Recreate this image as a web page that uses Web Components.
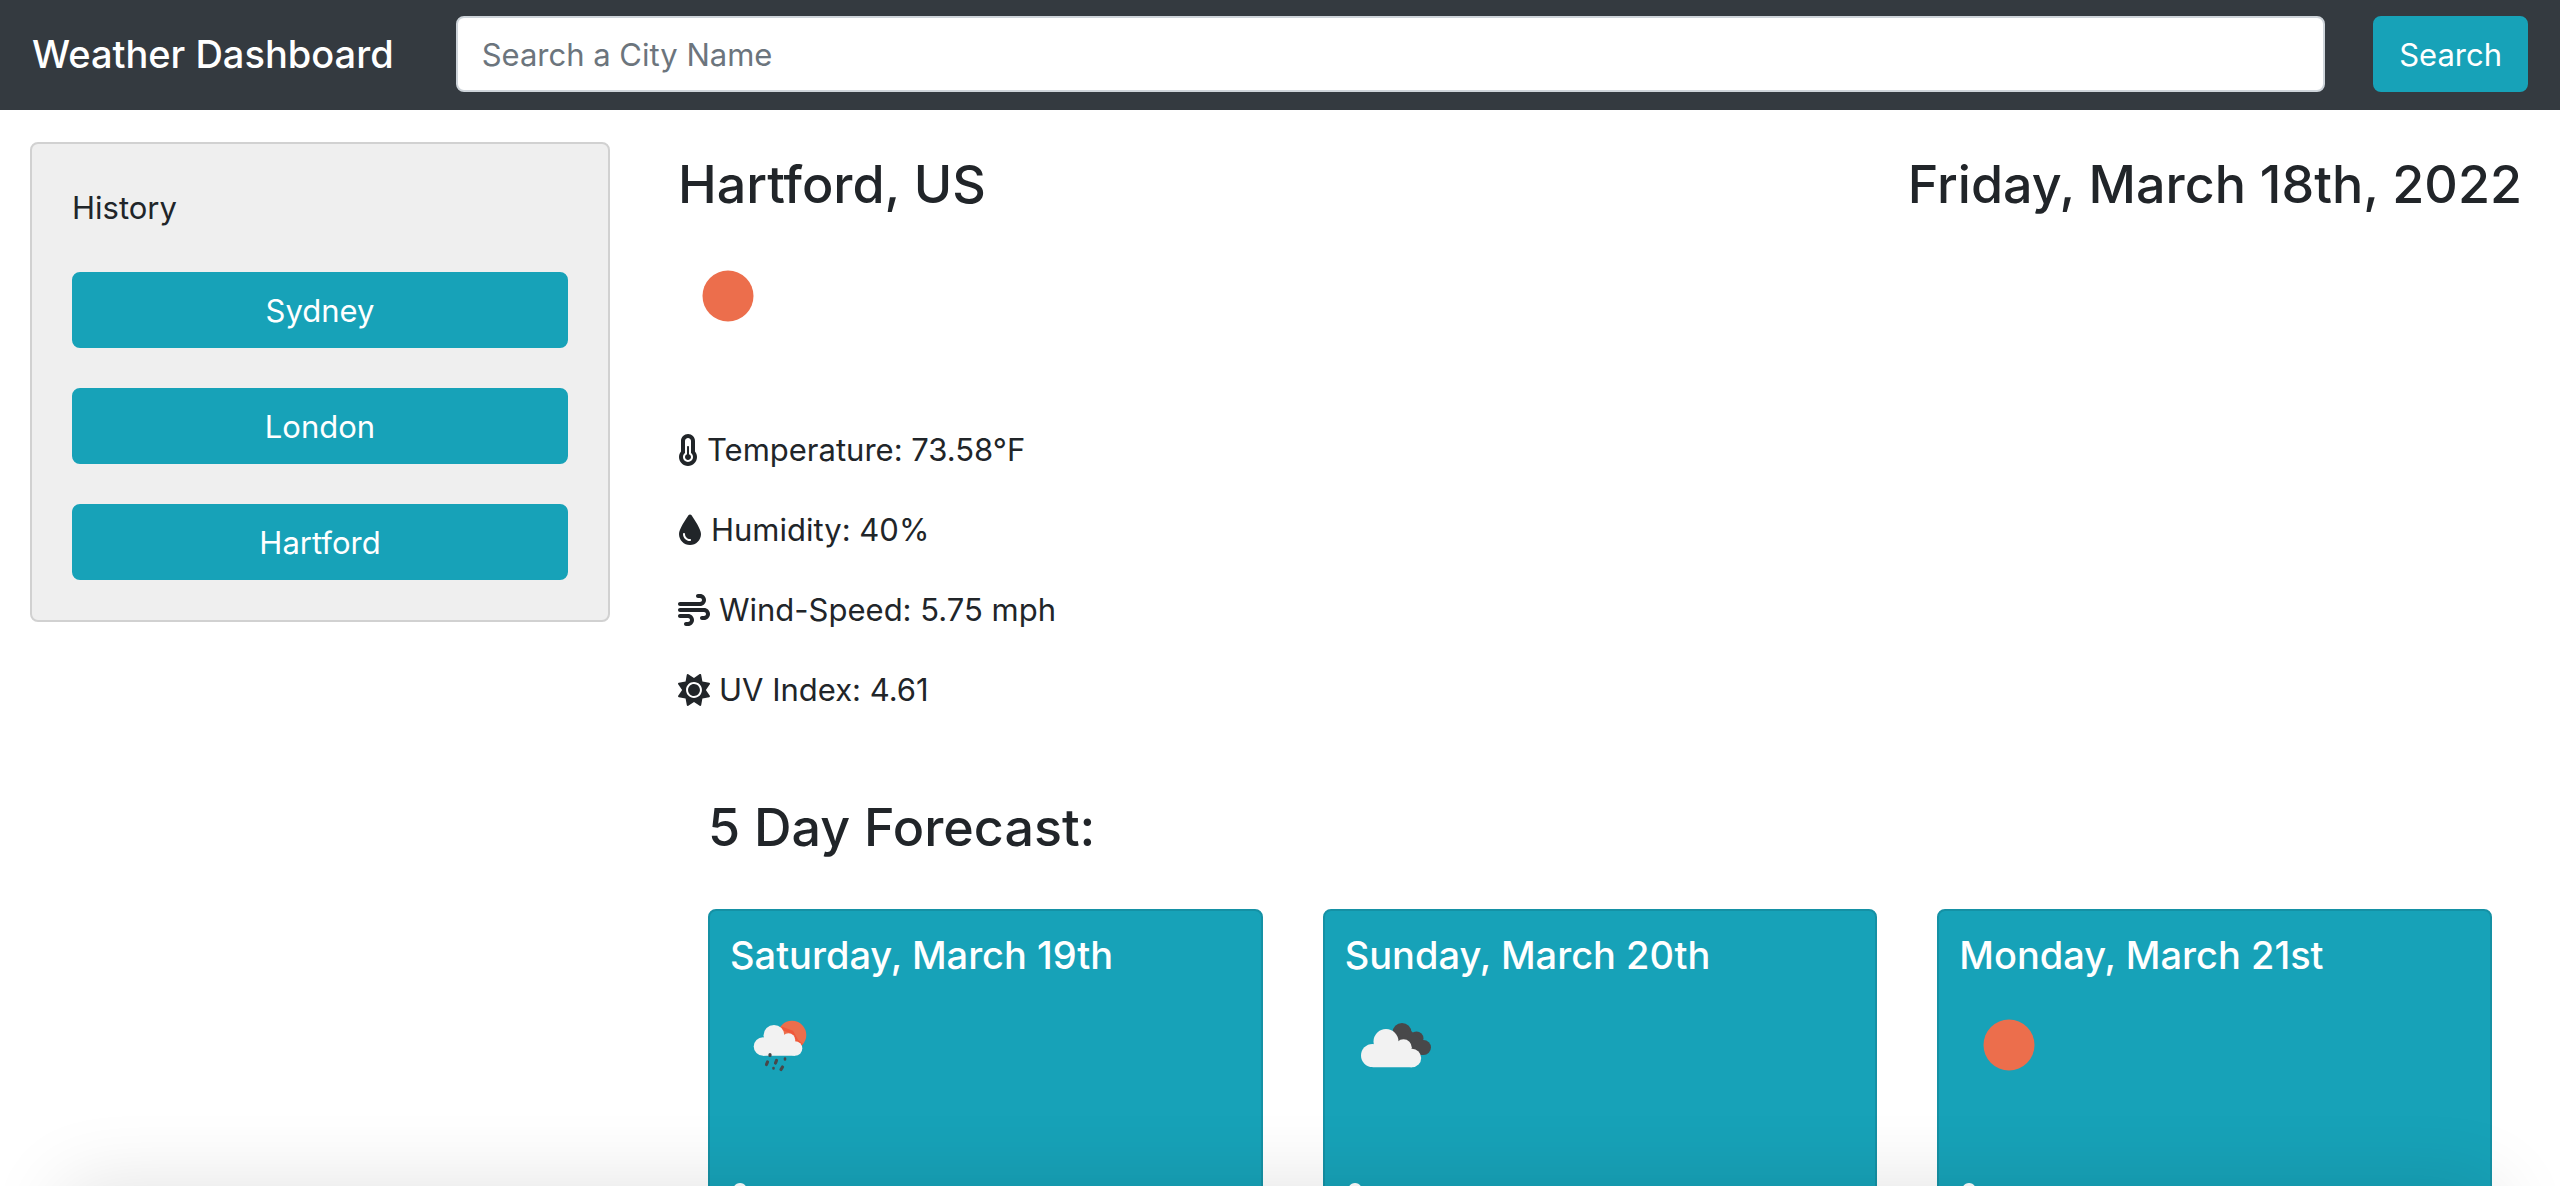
<!DOCTYPE html>
<html lang="en">
<head>
<meta charset="utf-8">
<title>Weather Dashboard</title>
<style>
  body {
    margin: 0;
    height: 100vh;
    overflow: hidden;
    background: #fff;
    color: #212529;
    font-family: Inter, "Liberation Sans", sans-serif;
    font-size: 31px;
    line-height: 48px;
  }
</style>
</head>
<body>
<weather-app></weather-app>

<script>
  const define = (name, html) => {
    const template = document.createElement('template');
    template.innerHTML = html;
    customElements.define(name, class extends HTMLElement {
      constructor() {
        super();
        this.attachShadow({ mode: 'open' }).append(template.content.cloneNode(true));
      }
    });
  };

  /* Small glyphs in front of each reading */
  const GLYPHS = {
    thermometer: [320, 'M176 322.9l.0002-114.9c0-8.75-7.25-16-16-16s-15.1 7.25-15.1 16L144 322.9c-18.62 6.625-32 24.25-32 45.13c0 26.5 21.5 48 48 48s48-21.5 48-48C208 347.1 194.6 329.5 176 322.9zM272 278.5V112c0-61.87-50.12-112-111.1-112S48 50.13 48 112v166.5c-19.75 24.75-32 55.5-32 89.5c0 79.5 64.5 143.1 144 143.1S304 447.5 304 368C304 334 291.8 303.1 272 278.5zM160 448c-44.13 0-80-35.87-80-79.1c0-25.5 12.25-48.88 32-63.75v-192.3c0-26.5 21.5-48 48-48s48 21.5 48 48v192.3c19.75 14.75 32 38.25 32 63.75C240 412.1 204.1 448 160 448z'],
    droplet: [384, 'M16 319.1C16 245.9 118.3 89.43 166.9 19.3C179.2 1.585 204.8 1.585 217.1 19.3C265.7 89.43 368 245.9 368 319.1C368 417.2 289.2 496 192 496C94.8 496 16 417.2 16 319.1zM112 319.1C112 311.2 104.8 303.1 96 303.1C87.16 303.1 80 311.2 80 319.1C80 381.9 130.1 432 192 432C200.8 432 208 424.8 208 416C208 407.2 200.8 400 192 400C147.8 400 112 364.2 112 319.1z'],
    wind: [512, 'M32 192h320c52.94 0 96-43.06 96-96s-43.06-96-96-96h-32c-17.69 0-32 14.31-32 32s14.31 32 32 32h32c17.66 0 32 14.34 32 32s-14.34 32-32 32H32c-17.69 0-32 14.31-32 32S14.31 192 32 192zM160 320H32c-17.69 0-32 14.31-32 32s14.31 32 32 32h128c17.66 0 32 14.34 32 32s-14.34 32-32 32H128c-17.69 0-32 14.31-32 32s14.31 32 32 32h32c52.94 0 96-43.06 96-96S212.9 320 160 320zM416 224H32C14.31 224 0 238.3 0 256s14.31 32 32 32h384c17.66 0 32 14.34 32 32s-14.34 32-32 32h-32c-17.69 0-32 14.31-32 32s14.31 32 32 32h32c52.94 0 96-43.06 96-96S468.9 224 416 224z'],
    sun: [512, 'M256 159.1c-53.02 0-95.1 42.98-95.1 95.1S202.1 351.1 256 351.1s95.1-42.98 95.1-95.1S309 159.1 256 159.1zM509.3 347L446.1 255.1l63.15-91.01c6.332-9.125 1.104-21.74-9.826-23.72l-109-19.7l-19.7-109c-1.975-10.93-14.59-16.16-23.72-9.824L256 65.89L164.1 2.736c-9.125-6.332-21.74-1.107-23.72 9.824L121.6 121.6L12.56 141.3C1.633 143.2-3.596 155.9 2.736 164.1L65.89 256l-63.15 91.01c-6.332 9.125-1.105 21.74 9.824 23.72l109 19.7l19.7 109c1.975 10.93 14.59 16.16 23.72 9.824L256 446.1l91.01 63.15c9.127 6.334 21.75 1.107 23.72-9.822l19.7-109l109-19.7C510.4 368.8 515.6 356.1 509.3 347zM256 383.1c-70.69 0-127.1-57.31-127.1-127.1c0-70.69 57.31-127.1 127.1-127.1s127.1 57.3 127.1 127.1C383.1 326.7 326.7 383.1 256 383.1z']
  };

  customElements.define('glyph-icon', class extends HTMLElement {
    constructor() {
      super();
      this.attachShadow({ mode: 'open' });
    }
    connectedCallback() {
      const [width, path] = GLYPHS[this.getAttribute('name')];
      this.shadowRoot.innerHTML = `
        <style>:host { display: block; flex: none } svg { display: block; height: 32px; fill: currentColor }</style>
        <svg viewBox="0 0 ${width} 512" aria-hidden="true"><path d="${path}"/></svg>`;
    }
  });

  /* Weather condition pictures */
  const CONDITIONS = {
    clear: '<circle cx="50" cy="50" r="25.5" fill="#ec6e4c"/>',
    rain: `
      <circle cx="62" cy="40" r="14.3" fill="#ec6e4c"/>
      <path d="M51 33l11 4l5 9l5 4" fill="none" stroke="#f0583a" stroke-width="3"/>
      <g fill="#f2f2f2">
        <circle cx="33" cy="51.500" r="9.300"/>
        <circle cx="44" cy="40.500" r="10.500"/>
        <circle cx="58.500" cy="45" r="6.800"/>
        <circle cx="65" cy="53.500" r="7.300"/>
        <path d="M33 44h26l6 6v10.800h-32z"/>
      </g>
      <g stroke="#48484a" stroke-width="3.200" stroke-linecap="round">
        <path d="M40 59.500v1M37.500 67l-1 2.500M46.500 65.500l-1 2.500M52.500 72l-1.500 2.500"/>
        <path stroke-width="2.600" d="M55 63.500v1M43.500 73v.5"/>
      </g>`,
    clouds: `
      <g fill="#48484a">
        <circle cx="57" cy="37.500" r="9.500"/>
        <circle cx="71.500" cy="43.500" r="7"/>
        <circle cx="78.500" cy="52.500" r="7.500"/>
        <path d="M48 39l18-3l12 10l0 14l-12 0z"/>
      </g>
      <g fill="#f2f2f2">
        <circle cx="27.500" cy="60.500" r="11.500"/>
        <circle cx="41" cy="46.500" r="12.500"/>
        <circle cx="58.500" cy="52.500" r="8.300"/>
        <circle cx="67" cy="63" r="9.200"/>
        <path d="M27.500 50h32l7.500 8v14.200h-39.500z"/>
      </g>`
  };

  customElements.define('condition-icon', class extends HTMLElement {
    constructor() {
      super();
      this.attachShadow({ mode: 'open' });
    }
    connectedCallback() {
      const name = this.getAttribute('name');
      this.shadowRoot.innerHTML = `
        <style>:host { display: block } svg { display: block; width: 100px; height: 100px }</style>
        <svg viewBox="0 0 100 100" role="img" aria-label="${name}">${CONDITIONS[name]}</svg>`;
    }
  });

  define('action-button', `
    <style>
      :host { display: block }
      button {
        display: block; width: 100%; margin: 0; padding: 13px 24px 11px;
        border: 2px solid #17a2b8; border-radius: 8px; background: #17a2b8;
        color: #fff; font: inherit; cursor: pointer;
      }
    </style>
    <button type="button"><slot></slot></button>`);

  define('nav-bar', `
    <style>
      :host { display: flex; align-items: center; gap: 62px; padding: 16px 32px 18px; background: #343a40; color: #fff }
      h1 { margin: 0; font-size: 38px; font-weight: 500; line-height: 60px; white-space: nowrap }
      form { display: flex; flex: 1; align-items: center; gap: 48px }
      input {
        box-sizing: border-box; flex: 1; min-width: 0; margin: 0; padding: 12px 24px;
        border: 2px solid #ced4da; border-radius: 8px; background: #fff; color: #495057;
        font: inherit; height: 76px;
      }
      input::placeholder { color: #6c757d; opacity: 1 }
    </style>
    <h1>Weather Dashboard</h1>
    <form role="search">
      <input type="search" placeholder="Search a City Name" aria-label="Search a City Name">
      <action-button>Search</action-button>
    </form>`);

  define('history-panel', `
    <style>
      :host {
        display: flex; flex-direction: column; gap: 40px; padding: 40px;
        border: 2px solid #d1d1d1; border-radius: 8px; background: #efefef;
      }
    </style>
    <span>History</span>
    <slot></slot>`);

  define('weather-reading', `
    <style>:host { display: flex; align-items: center; gap: 9px; height: 48px }</style>
    <slot></slot>`);

  define('current-weather', `
    <style>
      :host { display: block }
      header { display: flex; justify-content: space-between; margin-bottom: 28px }
      h2 { margin: 0; font-size: 52px; font-weight: 500; line-height: 67px }
      .readings { display: flex; flex-direction: column; gap: 32px; margin-top: 80px }
    </style>
    <header><h2><slot name="city"></slot></h2><h2><slot name="date"></slot></h2></header>
    <slot name="condition"></slot>
    <div class="readings"><slot></slot></div>`);

  define('forecast-card', `
    <style>
      :host {
        display: block; padding: 20px; border: 2px solid #1591a5; border-radius: 8px;
        background: #17a2b8; color: #fff;
      }
      h3 { margin: 0 0 16px; font-size: 38px; font-weight: 500; line-height: 48px }
      .readings { margin-top: 80px }
    </style>
    <h3><slot name="day"></slot></h3>
    <slot name="condition"></slot>
    <div class="readings"><slot></slot></div>`);

  define('forecast-list', `
    <style>
      :host { display: block; padding: 0 30px }
      h2 { margin: 0 0 48px; font-size: 52px; font-weight: 500; line-height: 67px }
      .cards { display: grid; grid-template-columns: repeat(3, 1fr); gap: 60px }
    </style>
    <h2>5 Day Forecast:</h2>
    <div class="cards"><slot></slot></div>`);

  /* Soft shadow rising from the lower edge of the window */
  define('edge-shadow', `
    <style>
      :host {
        position: fixed; top: 100%; left: 64px; right: 64px; height: 200px;
        box-shadow: 0 0 80px rgba(0, 0, 0, .12); pointer-events: none;
      }
    </style>`);

  define('weather-app', `
    <style>
      :host { display: block; height: 100vh; overflow: hidden }
      .layout { display: grid; grid-template-columns: 1fr 3fr; padding-top: 32px }
      aside { padding: 0 30px }
      main { display: flex; flex-direction: column; gap: 80px; padding: 9px 38px 40px }
    </style>
    <nav-bar></nav-bar>
    <div class="layout">
      <aside>
        <history-panel>
          <action-button>Sydney</action-button>
          <action-button>London</action-button>
          <action-button>Hartford</action-button>
        </history-panel>
      </aside>
      <main>
        <current-weather>
          <span slot="city">Hartford, US</span>
          <span slot="date">Friday, March 18th, 2022</span>
          <condition-icon slot="condition" name="clear"></condition-icon>
          <weather-reading><glyph-icon name="thermometer"></glyph-icon><span>Temperature: 73.58°F</span></weather-reading>
          <weather-reading><glyph-icon name="droplet"></glyph-icon><span>Humidity: 40%</span></weather-reading>
          <weather-reading><glyph-icon name="wind"></glyph-icon><span>Wind-Speed: 5.75 mph</span></weather-reading>
          <weather-reading><glyph-icon name="sun"></glyph-icon><span>UV Index: 4.61</span></weather-reading>
        </current-weather>
        <forecast-list>
          <forecast-card>
            <span slot="day">Saturday, March 19th</span>
            <condition-icon slot="condition" name="rain"></condition-icon>
            <weather-reading><glyph-icon name="thermometer"></glyph-icon></weather-reading>
          </forecast-card>
          <forecast-card>
            <span slot="day">Sunday, March 20th</span>
            <condition-icon slot="condition" name="clouds"></condition-icon>
            <weather-reading><glyph-icon name="thermometer"></glyph-icon></weather-reading>
          </forecast-card>
          <forecast-card>
            <span slot="day">Monday, March 21st</span>
            <condition-icon slot="condition" name="clear"></condition-icon>
            <weather-reading><glyph-icon name="thermometer"></glyph-icon></weather-reading>
          </forecast-card>
        </forecast-list>
      </main>
    </div>
    <edge-shadow></edge-shadow>`);
</script>
</body>
</html>
